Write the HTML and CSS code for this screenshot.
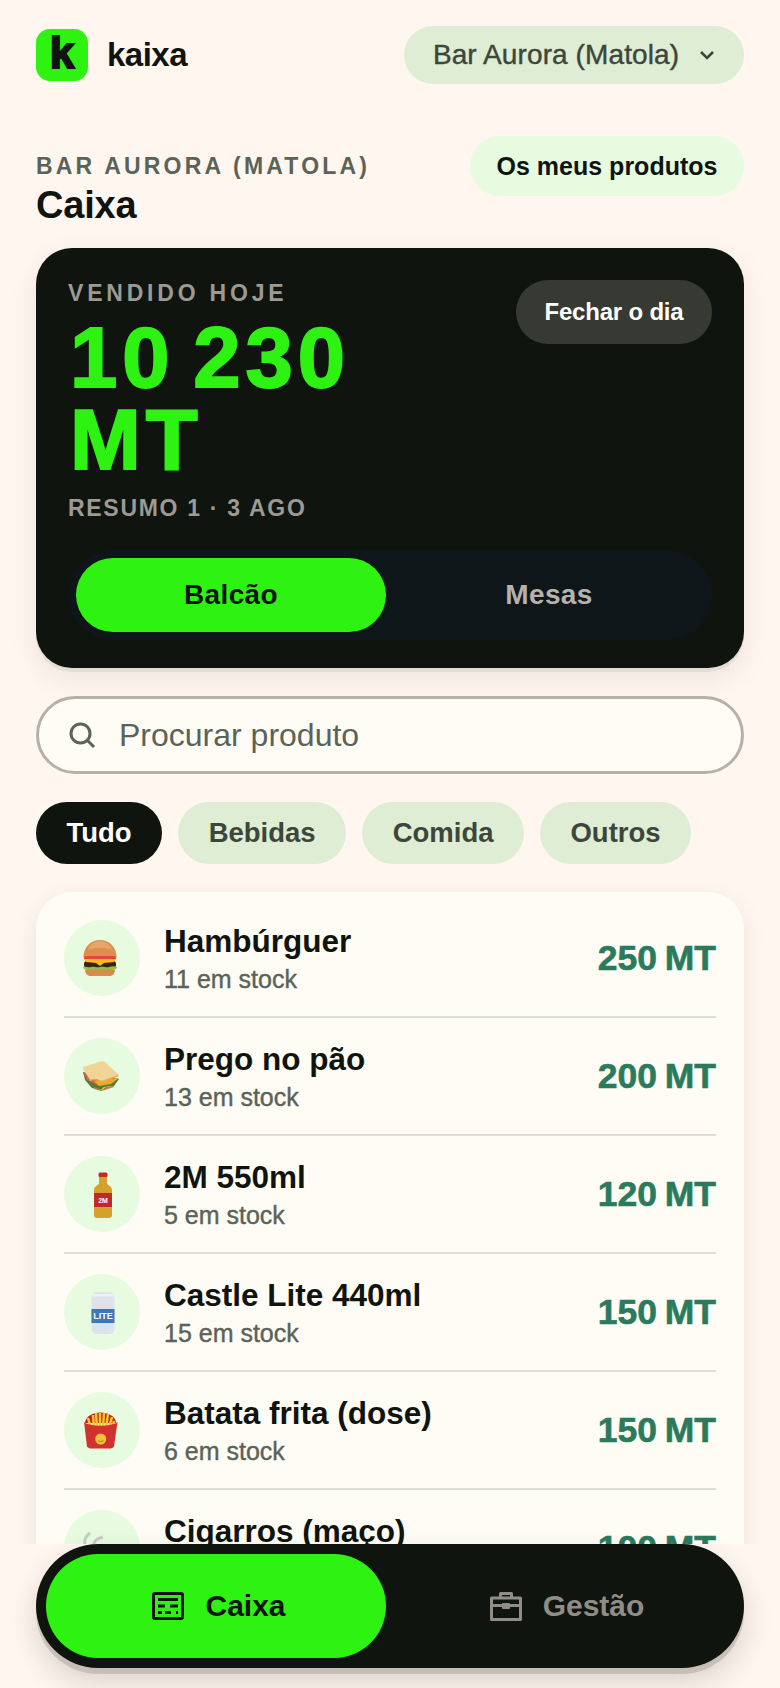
FILE: index.html
```html
<!DOCTYPE html>
<html lang="pt">
<head>
    <meta charset="utf-8" />
    <title>kaixa</title>
    <link rel="stylesheet" href="styles.css">
</head>
<body>
<div class="app">
    <div class="scroll">
        <header class="top">
            <div class="brand">
                <span class="logo">k</span>
                <span class="brand-name">kaixa</span>
            </div>
            <button class="place">
                Bar Aurora (Matola)
                <svg class="chev" width="16" height="10" viewBox="0 0 16 10"><path d="M2 2l6 6 6-6" fill="none" stroke="#3d463b" stroke-width="2.6"/></svg>
            </button>
        </header>

        <div class="head">
            <div>
                <p class="eyebrow">BAR AURORA (MATOLA)</p>
                <h1 class="title">Caixa</h1>
            </div>
            <button class="link-btn">Os meus produtos</button>
        </div>

        <section class="sales">
            <div class="sales-top">
                <div>
                    <p class="sales-label">VENDIDO HOJE</p>
                    <p class="amount">10 230 MT</p>
                    <p class="sales-sub">RESUMO 1 · 3 AGO</p>
                </div>
                <button class="close-day">Fechar o dia</button>
            </div>
            <div class="seg">
                <span class="seg-item on">Balcão</span>
                <span class="seg-item">Mesas</span>
            </div>
        </section>

        <div class="search">
            <svg width="28" height="28" viewBox="0 0 28 28"><circle cx="12.5" cy="12.5" r="9.5" fill="none" stroke="#5a6357" stroke-width="3"/><path d="M19.5 19.5l6.5 6.5" stroke="#5a6357" stroke-width="3"/></svg>
            <span>Procurar produto</span>
        </div>

        <div class="chips">
            <span class="chip on">Tudo</span>
            <span class="chip">Bebidas</span>
            <span class="chip">Comida</span>
            <span class="chip">Outros</span>
        </div>

        <ul class="list">
            <li class="row">
                <span class="pic">
                    <svg width="76" height="76" viewBox="0 0 76 76">
                        <path d="M19.500 38C19 27 27 20 36 20s17 7 16.500 18z" fill="#dc8f4e"/>
                        <path d="M24 30c2-6 7-9 12-9s10 3 12 9c-7-3-17-3-24 0z" fill="#e9a566"/>
                        <rect x="20" y="36" width="32" height="4" rx="2" fill="#e4473a"/>
                        <rect x="20" y="41" width="32" height="7" rx="3" fill="#3f2014"/>
                        <path d="M20 39h32l-2 3-10 1-4 3-4-3-10-1z" fill="#f7bb1f"/>
                        <path d="M19 47c3-1 5 1 8 0s5 1 9 0 6 1 9 0 5-1 8 0c0 2-3 3-6 3H25c-3 0-6-1-6-3z" fill="#8cc340"/>
                        <path d="M21 49.500h30c0 4-2 6.500-6 6.500H27c-4 0-6-2.500-6-6.500z" fill="#d68b50"/>
                    </svg>
                </span>
                <div class="info"><p class="name">Hambúrguer</p><p class="stock">11 em stock</p></div>
                <span class="price">250 MT</span>
            </li>
            <li class="row">
                <span class="pic">
                    <svg width="76" height="76" viewBox="0 0 76 76">
                        <path d="M19 34l36 7-5 7-10 1-3 3-9-2-7-8z" fill="#4f7f35"/>
                        <path d="M19 34l20 12-6 1-10-5z" fill="#d9604a"/>
                        <path d="M30 43l25-3-8 6-12 2z" fill="#f5a623"/>
                        <path d="M30 49l8 3 3-3 8-1 1 1-9 3-4 1-7-2z" fill="#b9803f"/>
                        <path d="M19 29l19-6c2 0 3 1 5 3l11 10c1 1 1 2 0 2l-14 5c-2 1-3 0-5-1-3-1-6-1-9 0l-3-5c-2-3-4-5-4-8z" fill="#f2d494"/>
                        <path d="M54 37l1 1-15 6c-2 1-3 0-5-1-3-1-6-1-9 0l-1-1c4-1 7-1 10 0 2 1 3 1 5 0z" fill="#e2ab5e"/>
                    </svg>
                </span>
                <div class="info"><p class="name">Prego no pão</p><p class="stock">13 em stock</p></div>
                <span class="price">200 MT</span>
            </li>
            <li class="row">
                <span class="pic">
                    <svg width="76" height="76" viewBox="0 0 76 76">
                        <path d="M35 20h8v7c0 2 5 3 5 7v25c0 2-1 3-3 3H33c-2 0-3-1-3-3V34c0-4 5-5 5-7z" fill="#d4a02e"/>
                        <rect x="34.500" y="16.500" width="9" height="4.500" rx="1.500" fill="#c4282a"/>
                        <rect x="30" y="37" width="18" height="14" fill="#c4282a"/>
                        <text x="39" y="46.500" class="can-text">2M</text>
                    </svg>
                </span>
                <div class="info"><p class="name">2M 550ml</p><p class="stock">5 em stock</p></div>
                <span class="price">120 MT</span>
            </li>
            <li class="row">
                <span class="pic">
                    <svg width="76" height="76" viewBox="0 0 76 76">
                        <rect x="27.500" y="18" width="23" height="42" rx="5" fill="#dde3ea"/>
                        <rect x="28.500" y="20" width="21" height="2.500" fill="#eef1f3"/>
                        <rect x="27.500" y="35" width="23" height="14" fill="#3c78b8"/>
                        <text x="39" y="45" class="can-text lite">LITE</text>
                    </svg>
                </span>
                <div class="info"><p class="name">Castle Lite 440ml</p><p class="stock">15 em stock</p></div>
                <span class="price">150 MT</span>
            </li>
            <li class="row">
                <span class="pic">
                    <svg width="76" height="76" viewBox="0 0 76 76">
                        <path d="M21 31c1-14 30-14 31 0z" fill="#c4201e"/>
                        <path d="M27 36l-3-10M30 36l-1-13M33 36l-1-15M36 36V21M39 36l1-15M42 36l2-14M45 36l3-11M48 36l2-7" stroke="#f8c630" stroke-width="2.500" fill="none"/>
                        <path d="M20 30c6 5 27 5 33.500 0L50 54.500c-1 1.500-3 2-4 2H27c-1 0-3-.500-4-2z" fill="#d1322f"/>
                        <circle cx="36.700" cy="47" r="5.500" fill="#f4c232"/>
                        <path d="M34 48.500c1.500 1.500 4 1.500 5.500 0" stroke="#b5761c" stroke-width="1" fill="none"/>
                    </svg>
                </span>
                <div class="info"><p class="name">Batata frita (dose)</p><p class="stock">6 em stock</p></div>
                <span class="price">150 MT</span>
            </li>
            <li class="row">
                <span class="pic">
                    <svg width="76" height="76" viewBox="0 0 76 76">
                        <path d="M21 34c-1-4 1-8 5-11M30 34c0-3 4-6 9-7" stroke="#c8cbc4" stroke-width="3" fill="none"/>
                        <rect x="18" y="46" width="40" height="7" fill="#f0e6d8"/>
                    </svg>
                </span>
                <div class="info"><p class="name">Cigarros (maço)</p><p class="stock">20 em stock</p></div>
                <span class="price">100 MT</span>
            </li>
        </ul>
    </div>

    <div class="bottom">
        <nav class="nav">
            <span class="nav-item on">
                <svg width="32" height="28" viewBox="0 0 32 28"><rect x="1.500" y="1.500" width="29" height="25" rx="1.500" fill="none" stroke="#10140f" stroke-width="3"/><path d="M6 7.500h20M6 14h7M18 14h8M6 20.500h4M13 20.500h6M24 20.500h2" stroke="#10140f" stroke-width="3" fill="none"/></svg>
                Caixa
            </span>
            <span class="nav-item">
                <svg width="32" height="30" viewBox="0 0 32 30"><path d="M10.500 7V2.500h11V7M1.500 7h29v21.500h-29zM1.500 14.500h11M19.500 14.500h11" fill="none" stroke="#8f8d86" stroke-width="3" stroke-linejoin="round"/><rect x="12" y="12" width="8" height="6" rx="1" fill="#8f8d86"/></svg>
                Gestão
            </span>
        </nav>
    </div>
</div>
</body>
</html>
```

FILE: styles.css
```css
/*清除默认样式*/
body,div,ul,p,li,h1{padding:0; margin:0;}
li{list-style:none;}
button{border:none; font-family:inherit; padding:0;}

html,body{height:100%;}
body{background:#fff6ef; color:#10140f; font-family:"Liberation Sans",Arial,sans-serif; overflow:hidden;}

.app{height:100vh; display:flex; flex-direction:column;}
.scroll{flex:1; min-height:0; overflow:hidden; padding:26px 36px 0;}

/*顶部*/
.top{display:flex; justify-content:space-between; align-items:center; height:58px;}
.brand{display:flex; align-items:center; gap:19px;}
.logo{width:52px; height:52px; border-radius:14px; background:#2ef312; display:flex; align-items:center; justify-content:center; font-size:44px; font-weight:700; line-height:1; padding-bottom:4px; box-sizing:border-box; -webkit-text-stroke:2px #10140f;}
.brand-name{font-size:33px; font-weight:700; letter-spacing:-0.5px;}
.place{height:58px; width:340px; border-radius:29px; background:#deedd4; color:#3d463b; font-size:28px; font-weight:400; letter-spacing:.1px; -webkit-text-stroke:.4px #3d463b; display:flex; align-items:center; justify-content:center; gap:20px;}

.head{display:flex; justify-content:space-between; align-items:flex-start; margin-top:52px; height:90px;}
.eyebrow{font-size:23px; font-weight:700; letter-spacing:3.2px; color:#5a6357; margin-top:17px; line-height:26px;}
.title{font-size:38px; font-weight:700; line-height:42px; letter-spacing:-0.2px; margin-top:5px;}
.link-btn{width:274px; height:60px; border-radius:30px; background:#e6fbdf; color:#10140f; font-size:25px; font-weight:700;}

/*今日销售*/
.sales{margin-top:22px; height:420px; box-sizing:border-box; padding:32px 32px 28px; background:#10140f; border-radius:36px; box-shadow:0 4px 0 rgba(16,20,15,.06),0 10px 30px rgba(16,20,15,.08); display:flex; flex-direction:column; justify-content:space-between;}
.sales-top{display:flex; justify-content:space-between; align-items:flex-start;}
.sales-label{font-size:23px; font-weight:700; letter-spacing:3.8px; color:#9b9a93; line-height:26px;}
.amount{width:340px; font-size:85px; font-weight:700; line-height:82px; color:#2ef312; -webkit-text-stroke:2px #2ef312; margin:11px 0 0 2px; letter-spacing:5px; word-spacing:-10px;}
.sales-sub{font-size:23px; font-weight:700; letter-spacing:1.7px; color:#9b9a93; line-height:26px; margin-top:14px;}
.close-day{width:196px; height:64px; border-radius:32px; background:#373933; color:#fff; font-size:24px; font-weight:700; letter-spacing:-0.2px;}

.seg{height:90px; border-radius:45px; background:#0e161a; padding:8px; box-sizing:border-box; display:flex; gap:8px;}
.seg-item{flex:1; display:flex; align-items:center; justify-content:center; border-radius:37px; font-size:28px; font-weight:700; letter-spacing:.4px; color:#b5b3ac;}
.seg-item.on{background:#2ef312; color:#10140f;}

/*搜索*/
.search{margin-top:28px; height:78px; box-sizing:border-box; border:3px solid #b3b1a8; border-radius:39px; background:#fffbf5; display:flex; align-items:center; gap:23px; padding-left:29px; font-size:32px; color:#5a6357;}

.chips{display:flex; gap:16px; margin-top:28px;}
.chip{height:62px; padding:0 30.500px; border-radius:31px; background:#deedd4; color:#3d463b; font-size:27.500px; font-weight:700; display:flex; align-items:center;}
.chip.on{background:#10140f; color:#fff;}

/*商品列表*/
.list{margin-top:28px; background:#fffbf5; border-radius:36px 36px 0 0; padding:8px 28px; box-shadow:0 8px 24px rgba(16,20,15,.08);}
.row{display:flex; align-items:center; gap:24px; padding:20px 0; border-bottom:2px solid #e0ded6;}
.row:last-child{border-bottom:none;}
.pic{width:76px; height:76px; border-radius:50%; background:#e6fbdf; overflow:hidden;}
.pic svg{display:block;}
.can-text{font-size:7px; font-weight:700; fill:#fff; text-anchor:middle;}
.can-text.lite{font-size:9px;}
.info{flex:1; margin-top:2px;}
.name{font-size:31.500px; font-weight:700; line-height:36px;}
.stock{font-size:25px; color:#5a6357; -webkit-text-stroke:.4px #5a6357; line-height:32px; margin-top:4px;}
.price{font-size:35.500px; font-weight:700; color:#2a7a5c; -webkit-text-stroke:.6px #2a7a5c; word-spacing:-2px;}

/*底部导航*/
.bottom{height:144px; background:#fff6ef; padding:0 36px; box-sizing:border-box; position:relative;}
.nav{height:124px; border-radius:62px; background:#10140f; padding:10px; box-sizing:border-box; display:flex; gap:8px; box-shadow:0 6px 0 rgba(16,20,15,.14),0 14px 30px rgba(16,20,15,.16);}
.nav-item{flex:1; display:flex; align-items:center; justify-content:center; gap:21px; border-radius:52px; padding-left:6px; font-size:30px; font-weight:700; color:#8f8d86;}
.nav-item.on{background:#2ef312; color:#10140f;}
```
